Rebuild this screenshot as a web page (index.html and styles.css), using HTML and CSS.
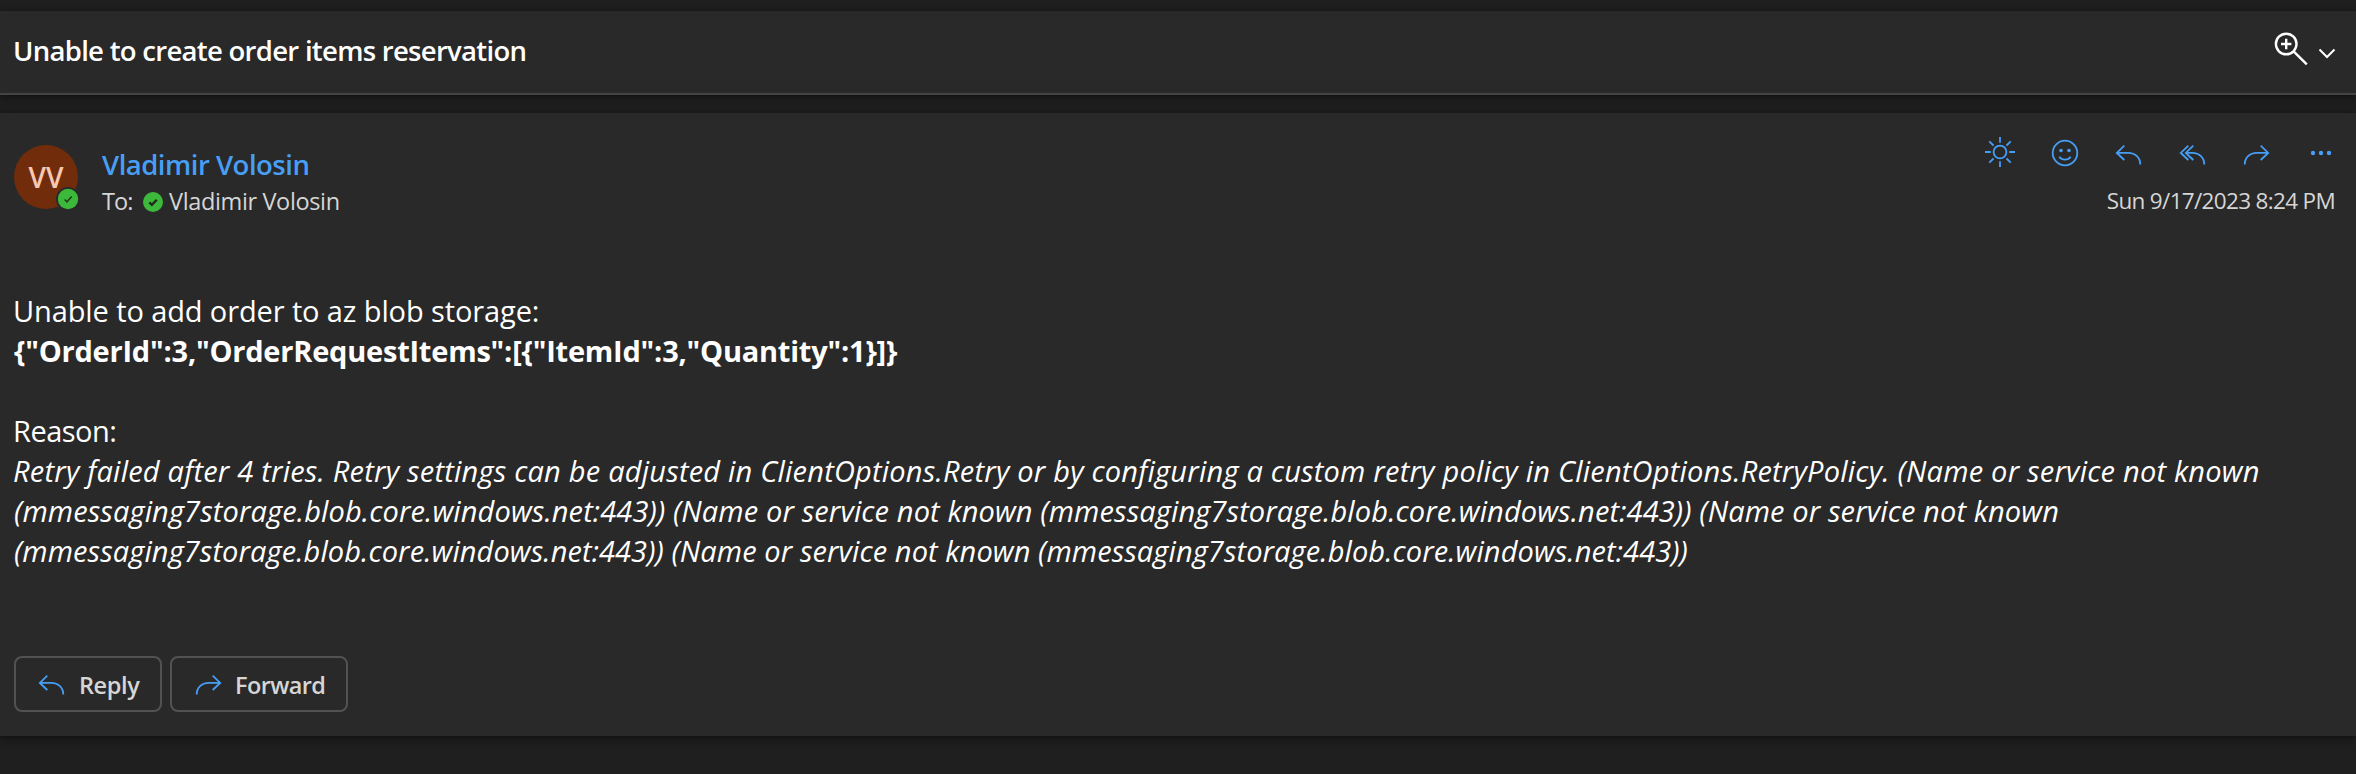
FILE: index.html
```html
<!DOCTYPE html>
<html lang="en">
<head>
<meta charset="utf-8">
<title>Unable to create order items reservation</title>
<link rel="stylesheet" href="styles.css">
</head>
<body>
<svg class="defs" aria-hidden="true">
  <symbol id="reply" viewBox="0 0 32 32"><path d="M12.3 8.7 4.8 15.9l7.5 7.1M5 15.8h11.2c7.2 0 12.1 4.9 12.1 11.8"/></symbol>
  <symbol id="forward" viewBox="0 0 32 32"><path d="M20.7 8.7l7.5 7.2-7.5 7.1M28 15.8H16.8C9.6 15.800 4.700 20.700 4.700 27.600"/></symbol>
</svg>
<header class="subject-bar">
  <h1 class="subject">Unable to create order items reservation</h1>
  <div class="zoom">
    <svg class="zoom-icon" width="32" height="32" viewBox="0 0 32 32"><circle cx="13.2" cy="12" r="10.3"/><path d="M13.2 6.8v10.4M8 12h10.4M20.600 19.400 33.800 32.400"/></svg>
    <svg class="chevron" width="20" height="12" viewBox="0 0 20 12"><path d="M2.5 2.5 10 10l7.5-7.5"/></svg>
  </div>
</header>
<main class="message">
  <section class="message-head">
    <div class="avatar">VV
      <svg class="avatar-presence" width="24" height="24" viewBox="0 0 24 24"><circle class="ring" cx="12" cy="12" r="12"/><circle class="available" cx="12" cy="12" r="10.2"/><path d="M8.6 12.5l2.300 2.300 4.800-5.300"/></svg>
    </div>
    <div class="people">
      <div class="sender">Vladimir Volosin</div>
      <div class="recipient"><span class="to">To:</span>
        <svg class="presence" width="20" height="22" viewBox="0 0 20 22"><circle class="available" cx="10" cy="11" r="10"/><path d="M6.300 11.300l2.600 2.600 4.900-5.200"/></svg>
        <span>Vladimir Volosin</span></div>
    </div>
    <div class="head-right">
      <div class="actions">
        <svg viewBox="0 0 32 32"><circle cx="16" cy="15" r="6.400"/><path d="M16 0v5.800M16 24.200V30M1 15h5.800M25.200 15H31M5.300 4.300l4.200 4.200M22.500 21.500l4.200 4.200M5.300 25.700l4.200-4.200M22.500 8.500l4.200-4.200"/></svg>
        <svg viewBox="0 0 32 32"><circle cx="17" cy="16" r="12.300"/><circle class="dot" cx="13" cy="13.500" r="1.800"/><circle class="dot" cx="21" cy="13.500" r="1.800"/><path d="M11.300 19.700c2.700 3.900 8.700 3.900 11.400 0"/></svg>
        <svg><use href="#reply"/></svg>
        <svg viewBox="0 0 32 32"><path d="M12.300 8.700 4.800 15.900l7.500 7.100M17.300 8.700 9.800 15.900l7.500 7.100M10 15.800h6.200c7.200 0 12.100 4.900 12.100 11.800"/></svg>
        <svg><use href="#forward"/></svg>
        <svg viewBox="0 0 32 32"><circle class="dot" cx="9" cy="16" r="2.200"/><circle class="dot" cx="17" cy="16" r="2.200"/><circle class="dot" cx="25" cy="16" r="2.200"/></svg>
      </div>
      <div class="date">Sun 9/17/2023 8:24 PM</div>
    </div>
  </section>
  <section class="body">
    <div class="intro">Unable to add order to az blob storage:</div>
    <div class="payload">{"OrderId":3,"OrderRequestItems":[{"ItemId":3,"Quantity":1}]}</div>
    <div class="reason">Reason:</div>
    <div class="error">
      <div class="line-a">Retry failed after 4 tries. Retry settings can be adjusted in ClientOptions.Retry or by configuring a custom retry policy in ClientOptions.RetryPolicy. (Name or service not known</div>
      <div class="line-b">(mmessaging7storage.blob.core.windows.net:443)) (Name or service not known (mmessaging7storage.blob.core.windows.net:443)) (Name or service not known</div>
      <div class="line-c">(mmessaging7storage.blob.core.windows.net:443)) (Name or service not known (mmessaging7storage.blob.core.windows.net:443))</div>
    </div>
  </section>
  <footer class="replies">
    <button class="btn"><svg><use href="#reply"/></svg><span class="reply-label">Reply</span></button>
    <button class="btn btn-forward"><svg><use href="#forward"/></svg><span class="forward-label">Forward</span></button>
  </footer>
</main>
</body>
</html>
```

FILE: styles.css
```css
* { box-sizing: border-box; }

body {
  margin: 0;
  height: 774px;
  padding-top: 11px;
  overflow: hidden;
  background: #1f1f1f;
  color: #fff;
  font-family: "Open Sans", "Noto Sans", sans-serif;
  white-space: nowrap;
}

svg {
  display: block;
  flex: none;
  fill: none;
  stroke: currentColor;
  stroke-width: 1.8;
  overflow: visible;
}

.defs { width: 0; height: 0; position: absolute; }
.dot { fill: currentColor; stroke: none; }

.subject-bar {
  display: flex;
  justify-content: space-between;
  height: 84px;
  padding: 22px 19px 0 13px;
  background: #292929;
  border-bottom: 2px solid #444;
  box-shadow: 0 0 2px #151515, 0 3px 8px #141414;
}

.subject {
  margin: 0;
  font-size: 27.5px;
  line-height: 36px;
  font-weight: 600;
  letter-spacing: -0.71px;
}

.zoom { display: flex; gap: 12px; }
.zoom-icon { stroke-width: 2.4; margin-top: -1px; }
.chevron { stroke-width: 2; margin-top: 14px; }

.message {
  height: 623px;
  margin-top: 18px;
  padding: 32px 20px 0 14px;
  background: #292929;
  box-shadow: 0 0 2px #151515, 0 3px 8px #141414;
}

.message-head { display: flex; height: 142px; }

.avatar {
  position: relative;
  width: 64px;
  height: 64px;
  border-radius: 50%;
  background: #712c0b;
  color: #f6c8b2;
  font-size: 28px;
  font-weight: 600;
  line-height: 64px;
  text-align: center;
}

.avatar-presence { position: absolute; left: 42px; top: 42px; }
.ring { fill: #292929; stroke: none; }
.available { fill: #3cb83a; stroke: none; }
.avatar-presence path { stroke: #1f3b1d; stroke-width: 1.5; }
.presence { margin: 1px 6px 0 0; }
.presence path { stroke: #1f2b1d; stroke-width: 2.4; }

.people { margin-left: 24px; }

.sender {
  height: 38px;
  color: #479ef5;
  font-size: 27.5px;
  font-weight: 600;
  line-height: 40px;
  letter-spacing: -0.5px;
}

.recipient {
  display: flex;
  align-items: center;
  height: 36px;
  color: #d6d6d6;
  font-size: 23.5px;
  line-height: 36px;
  letter-spacing: -0.36px;
}

.to { width: 41px; letter-spacing: -0.9px; }

.head-right { margin-left: auto; color: #d6d6d6; }
.actions { display: flex; gap: 32px; justify-content: flex-end; color: #479ef5; margin: -8px 0 0; }
.actions svg { width: 32px; height: 32px; }

.date {
  margin-top: 15px;
  margin-right: 1px;
  font-size: 22.5px;
  line-height: 34px;
  letter-spacing: -0.67px;
  text-align: right;
}

.body { font-size: 29px; line-height: 40px; height: 343px; padding-top: 4px; }
.intro { margin-left: -1px; letter-spacing: -0.11px; }
.payload { letter-spacing: -0.22px; font-weight: 700; }
.reason { margin: 40px 0 0 -1px; letter-spacing: -0.5px; }
.error { font-style: italic; }
.line-a { margin-left: -1px; letter-spacing: 0.215px; }
.line-b { letter-spacing: 0.12px; }
.line-c { letter-spacing: 0.09px; }

.replies { display: flex; gap: 8px; margin-top: 26px; }

.btn {
  display: flex;
  align-items: center;
  width: 148px;
  height: 56px;
  padding: 2px 0 0 19px;
  border: 2px solid #525252;
  border-radius: 8px;
  background: transparent;
  color: #d6d6d6;
  font-family: inherit;
  font-size: 23.5px;
  font-weight: 600;
}

.btn svg { width: 32px; height: 32px; margin-top: -5px; margin-right: 12px; color: #479ef5; }
.btn-forward { width: 178px; padding-left: 20px; }
.btn-forward svg { margin-right: 11px; }
.reply-label { letter-spacing: -0.4px; }
.forward-label { letter-spacing: -0.6px; }
```
